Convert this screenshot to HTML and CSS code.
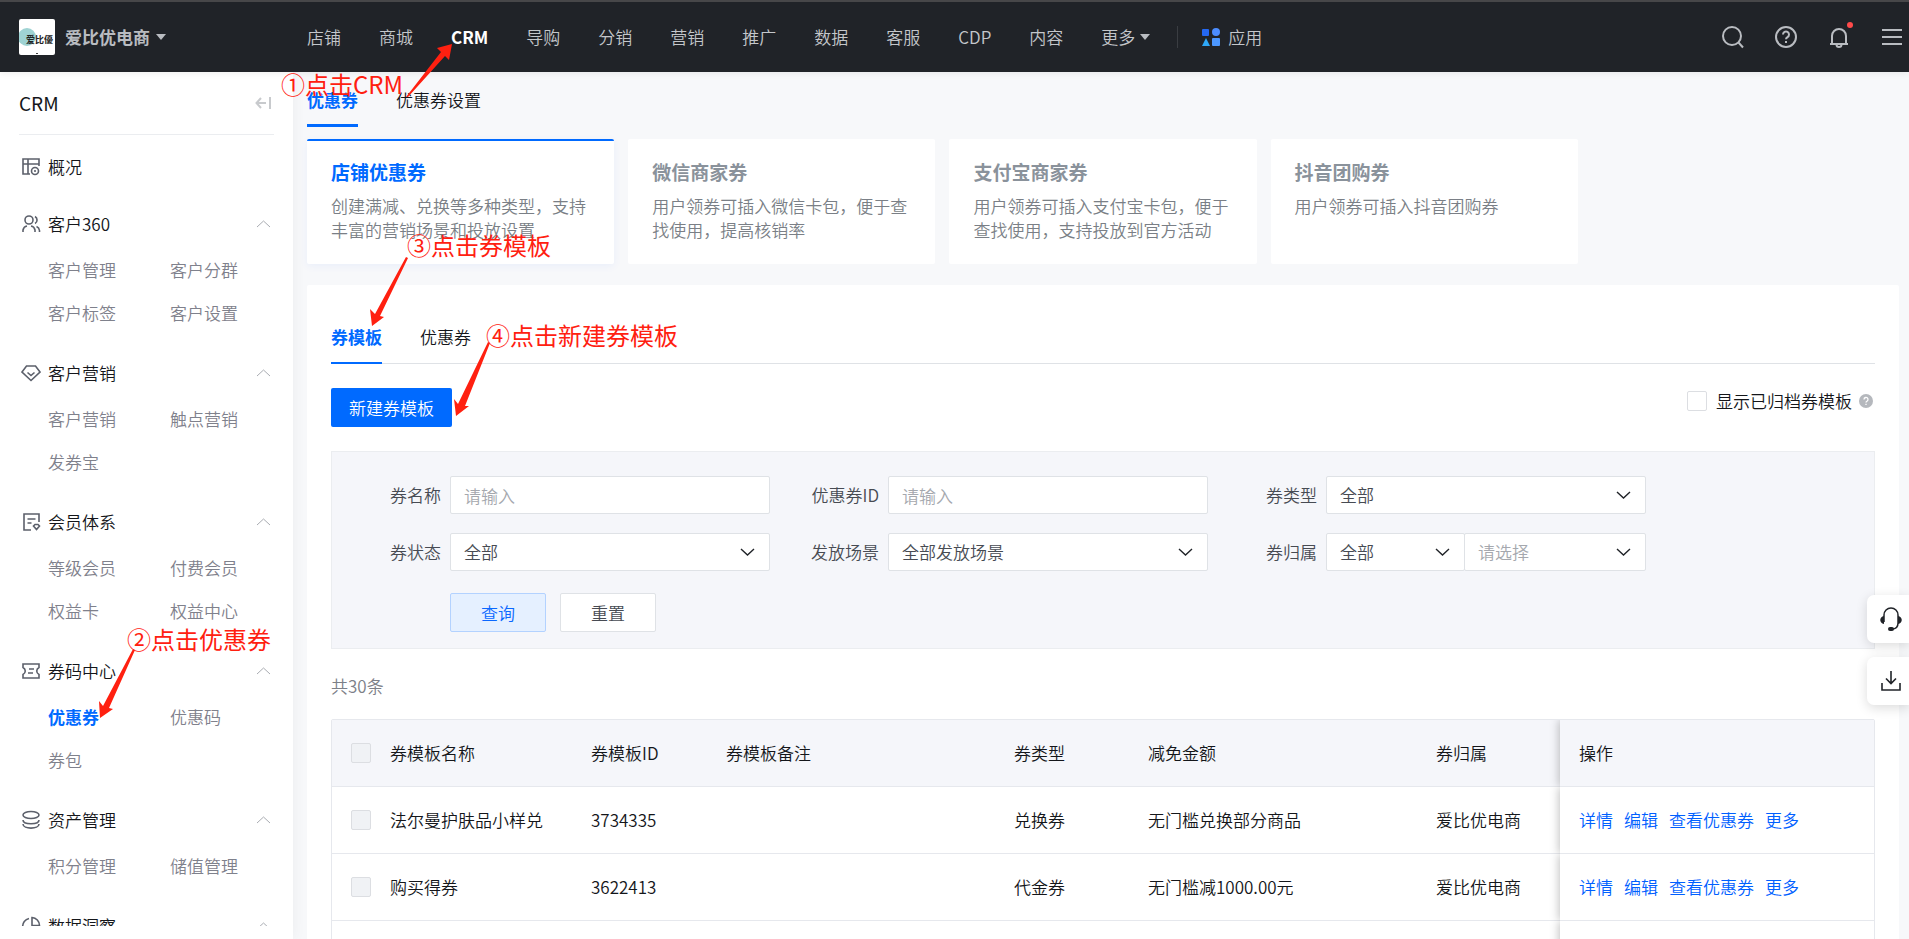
FILE: index.html
```
<!DOCTYPE html>
<html lang="zh-CN">
<head>
<meta charset="utf-8">
<title>优惠券 - CRM</title>
<link rel="stylesheet" href="styles.css">
</head>
<body>
<div class="app">
  <header class="topbar">
    <button class="shop" type="button">
      <svg class="shop-logo" viewBox="0 0 36 36" aria-hidden="true">
        <rect width="36" height="36" rx="2" fill="#fff"/>
        <circle cx="8" cy="18" r="9" fill="#9fd3d3"/>
        <text class="logo-text" x="7" y="24">爱比優</text>
        <rect x="17" y="34" width="2" height="1" fill="#444"/>
      </svg>
      <span class="shop-name">爱比优电商</span>
      <svg class="caret" viewBox="0 0 10 6"><path d="M0 0h10L5 6z"/></svg>
    </button>
    <nav class="topnav">
      <a href="#">店铺</a>
      <a href="#">商城</a>
      <a href="#" class="current">CRM</a>
      <a href="#">导购</a>
      <a href="#">分销</a>
      <a href="#">营销</a>
      <a href="#">推广</a>
      <a href="#">数据</a>
      <a href="#">客服</a>
      <a href="#">CDP</a>
      <a href="#">内容</a>
      <a href="#" class="more">更多<svg class="caret" viewBox="0 0 10 6"><path d="M0 0h10L5 6z"/></svg></a>
    </nav>
    <a href="#" class="apps">
      <svg width="18" height="18" viewBox="0 0 18 18" aria-hidden="true">
        <rect x="0" y="1" width="7" height="7" rx="1" fill="#2468f2"/>
        <circle cx="14" cy="4" r="4" fill="#4c8dff"/>
        <path d="M4 10l4 8H0z" fill="#2ea8f7"/>
        <rect x="10" y="10" width="8" height="8" rx="1" fill="#4c97ff"/>
      </svg>
      应用
    </a>
    <div class="tools">
      <button type="button" aria-label="搜索"><svg width="24" height="24" viewBox="0 0 24 24"><circle cx="11" cy="11" r="9"/><path d="M17.500 17.500l4.500 5"/></svg></button>
      <button type="button" aria-label="帮助"><svg width="24" height="24" viewBox="0 0 24 24"><circle cx="12" cy="12" r="10"/><path d="M9 9.500a3 3 0 1 1 4.500 2.600c-1 .6-1.500 1-1.500 2.200"/><path d="M12 16v2"/></svg></button>
      <button type="button" aria-label="通知" class="bell"><svg width="24" height="24" viewBox="0 0 24 24"><path d="M3 19h18M5 19v-8a7 7 0 0 1 14 0v8M9.500 19.500a2.500 2.500 0 0 0 5 0"/></svg><i class="dot"></i></button>
      <button type="button" aria-label="菜单"><svg width="24" height="24" viewBox="0 0 24 24"><path d="M2 5h20M2 12h20M2 19h20"/></svg></button>
    </div>
  </header>

  <div class="body">
    <aside class="sidebar">
      <div class="side-title">
        <h1>CRM</h1>
        <svg width="16" height="14" viewBox="0 0 16 14" aria-hidden="true"><path d="M11 7H2M6 2L1.500 7L6 12M15 1v12"/></svg>
      </div>
      <nav class="side-nav">
        <section class="group overview">
          <a class="head" href="#"><svg class="ico" viewBox="0 0 20 20"><path d="M18 9V2H2v15h7M2 7h16M7 2v15"/><circle cx="14" cy="14" r="3.500"/><path d="M14 13v2"/></svg><span>概况</span></a>
        </section>
        <section class="group">
          <a class="head" href="#"><svg class="ico" viewBox="0 0 20 20"><circle cx="8" cy="6" r="4"/><path d="M2 18v-2a5 5 0 0 1 4-4M10 12a5 5 0 0 1 4 4v2M14 2.500a4 4 0 0 1 0 7M15.500 12.500a5 5 0 0 1 3 4V18"/></svg><span>客户360</span><svg class="chev" viewBox="0 0 15 8"><path d="M1 7l6.500-6L14 7"/></svg></a>
          <div class="links"><a href="#">客户管理</a><a href="#">客户分群</a><a href="#">客户标签</a><a href="#">客户设置</a></div>
        </section>
        <section class="group">
          <a class="head" href="#"><svg class="ico" viewBox="0 0 20 20"><path d="M5.500 3h9L19 9l-9 8.500L1 9zM6.500 9.500L10 12.500l3.500-3"/></svg><span>客户营销</span><svg class="chev" viewBox="0 0 15 8"><path d="M1 7l6.500-6L14 7"/></svg></a>
          <div class="links"><a href="#">客户营销</a><a href="#">触点营销</a><a href="#">发券宝</a></div>
        </section>
        <section class="group">
          <a class="head" href="#"><svg class="ico" viewBox="0 0 20 20"><path d="M18 10V2H3v16h7M6.500 7h8M6.500 11h4"/><path d="M12.500 14l1.500-1.500h3l1.500 1.500-3 3.500z"/></svg><span>会员体系</span><svg class="chev" viewBox="0 0 15 8"><path d="M1 7l6.500-6L14 7"/></svg></a>
          <div class="links"><a href="#">等级会员</a><a href="#">付费会员</a><a href="#">权益卡</a><a href="#">权益中心</a></div>
        </section>
        <section class="group">
          <a class="head" href="#"><svg class="ico" viewBox="0 0 20 20"><path d="M2 3h16v3.500c-3 1.500-3 5.500 0 7V17H2v-3.500c3-1.500 3-5.500 0-7zM8 8h5M7 12h5"/></svg><span>券码中心</span><svg class="chev" viewBox="0 0 15 8"><path d="M1 7l6.500-6L14 7"/></svg></a>
          <div class="links"><a href="#" class="current">优惠券</a><a href="#">优惠码</a><a href="#">券包</a></div>
        </section>
        <section class="group">
          <a class="head" href="#"><svg class="ico" viewBox="0 0 20 20"><ellipse cx="10" cy="5" rx="8" ry="3.500"/><path d="M2 10c0 5 16 5 16 0M2 14c0 5.500 16 5.500 16 0"/></svg><span>资产管理</span><svg class="chev" viewBox="0 0 15 8"><path d="M1 7l6.500-6L14 7"/></svg></a>
          <div class="links"><a href="#">积分管理</a><a href="#">储值管理</a></div>
        </section>
        <section class="group">
          <a class="head" href="#"><svg class="ico" viewBox="0 0 20 20"><path d="M8 2.500a8 8 0 1 0 9.500 9.500M11 1.500a8 8 0 0 1 7.500 8H11z"/></svg><span>数据洞察</span><svg class="chev" viewBox="0 0 15 8"><path d="M1 7l6.500-6L14 7"/></svg></a>
        </section>
      </nav>
    </aside>

    <main class="main">
      <nav class="page-tabs">
        <a href="#" class="current">优惠券</a>
        <a href="#">优惠券设置</a>
      </nav>

      <div class="cards">
        <a class="card current" href="#"><h2>店铺优惠券</h2><p>创建满减、兑换等多种类型，支持丰富的营销场景和投放设置</p></a>
        <a class="card" href="#"><h2>微信商家券</h2><p>用户领券可插入微信卡包，便于查找使用，提高核销率</p></a>
        <a class="card" href="#"><h2>支付宝商家券</h2><p>用户领券可插入支付宝卡包，便于查找使用，支持投放到官方活动</p></a>
        <a class="card" href="#"><h2>抖音团购券</h2><p>用户领券可插入抖音团购券</p></a>
      </div>

      <section class="panel">
        <nav class="panel-tabs">
          <a href="#" class="current">券模板</a>
          <a href="#">优惠券</a>
        </nav>
        <div class="actions">
          <button class="btn primary" type="button">新建券模板</button>
          <label class="archived"><input type="checkbox" class="check">显示已归档券模板<svg width="14" height="14" viewBox="0 0 14 14" aria-hidden="true"><circle cx="7" cy="7" r="7" fill="#b5b8bd"/><path d="M5 5.500a2 2 0 1 1 3 1.700c-.7.400-1 .6-1 1.300M7 9.800v1.200" fill="none" stroke="#fff" stroke-width="1.300"/></svg></label>
        </div>

        <form class="filter">
          <label for="f-name">券名称</label>
          <input id="f-name" class="field" type="text" placeholder="请输入">
          <label for="f-id">优惠券ID</label>
          <input id="f-id" class="field" type="text" placeholder="请输入">
          <label for="f-type">券类型</label>
          <div class="select"><select id="f-type" class="field"><option>全部</option></select><svg viewBox="0 0 15 8"><path d="M1 1l6.500 6L14 1"/></svg></div>

          <label for="f-status">券状态</label>
          <div class="select"><select id="f-status" class="field"><option>全部</option></select><svg viewBox="0 0 15 8"><path d="M1 1l6.500 6L14 1"/></svg></div>
          <label for="f-scene">发放场景</label>
          <div class="select"><select id="f-scene" class="field"><option>全部发放场景</option></select><svg viewBox="0 0 15 8"><path d="M1 1l6.500 6L14 1"/></svg></div>
          <label for="f-owner">券归属</label>
          <div class="pair">
            <div class="select"><select id="f-owner" class="field"><option>全部</option></select><svg viewBox="0 0 15 8"><path d="M1 1l6.500 6L14 1"/></svg></div>
            <div class="select"><select class="field empty" aria-label="归属店铺"><option>请选择</option></select><svg viewBox="0 0 15 8"><path d="M1 1l6.500 6L14 1"/></svg></div>
          </div>

          <div class="filter-actions">
            <button class="btn soft" type="button">查询</button>
            <button class="btn plain" type="button">重置</button>
          </div>
        </form>

        <p class="total">共30条</p>

        <table class="grid">
          <colgroup><col class="c-check"><col class="c-name"><col class="c-id"><col class="c-note"><col class="c-type"><col class="c-amount"><col class="c-owner"><col></colgroup>
          <thead>
            <tr><th><input type="checkbox" class="check" disabled aria-label="全选"></th><th>券模板名称</th><th>券模板ID</th><th>券模板备注</th><th>券类型</th><th>减免金额</th><th>券归属</th><th class="ops">操作</th></tr>
          </thead>
          <tbody>
            <tr><td><input type="checkbox" class="check" disabled aria-label="选择 3734335"></td><td>法尔曼护肤品小样兑</td><td>3734335</td><td></td><td>兑换券</td><td>无门槛兑换部分商品</td><td>爱比优电商</td><td class="ops"><div class="op-links"><a href="#">详情</a><a href="#">编辑</a><a href="#">查看优惠券</a><a href="#">更多</a></div></td></tr>
            <tr><td><input type="checkbox" class="check" disabled aria-label="选择 3622413"></td><td>购买得券</td><td>3622413</td><td></td><td>代金券</td><td>无门槛减1000.00元</td><td>爱比优电商</td><td class="ops"><div class="op-links"><a href="#">详情</a><a href="#">编辑</a><a href="#">查看优惠券</a><a href="#">更多</a></div></td></tr>
            <tr><td></td><td></td><td></td><td></td><td></td><td></td><td></td><td class="ops"></td></tr>
          </tbody>
        </table>
      </section>
    </main>
  </div>

  <div class="floating">
    <button type="button" aria-label="客服"><svg width="24" height="26" viewBox="0 0 24 26"><path d="M5 16V9a7 7 0 0 1 14 0v8c0 4-2 6-6 6" fill="none" stroke="#202328" stroke-width="1.500"/><path d="M5 10v8c-5-1-5-7 0-8zM19 10v8c5-1 5-7 0-8z" fill="#202328"/><rect x="9" y="21" width="6" height="4" rx="2" fill="#202328"/></svg></button>
    <button type="button" aria-label="下载"><svg width="24" height="24" viewBox="0 0 24 24"><path d="M12 2v12M7 9.500l5 5 5-5M3 14v7h18v-7" fill="none" stroke="#202328" stroke-width="1.600"/></svg></button>
  </div>

  <div class="notes">
    <svg class="arrows" aria-hidden="true">
      <path d="M406 97L441 52L437 48L452 44L449 60L445 56L408 97z"/>
      <path d="M133 649L103 706L99 701L100 718L113 709L109 708L135 650z"/>
      <path d="M406 257L375 314L370 309L372 326L384 317L380 316L408 258z"/>
      <path d="M488 342L458 404L454 399L456 416L469 406L465 406L490 343z"/>
    </svg>
    <span class="note n1">①点击CRM</span>
    <span class="note n2">②点击优惠券</span>
    <span class="note n3">③点击券模板</span>
    <span class="note n4">④点击新建券模板</span>
  </div>
</div>
</body>
</html>
```
FILE: styles.css
```
* { box-sizing: border-box; }
body {
  margin: 0;
  font: 350 17px/24px "Noto Sans CJK SC", sans-serif;
  color: #14161a;
  background: #f7f8fa;
}
a { color: inherit; text-decoration: none; }
h1, h2, p { margin: 0; }
button, input, select { font: inherit; color: inherit; margin: 0; }
button { padding: 0; border: 0; background: none; cursor: pointer; }
svg { display: block; flex: none; }

.app { position: relative; display: flex; flex-direction: column; height: 100vh; overflow: hidden; }

/* top bar */
.topbar {
  position: relative;
  z-index: 1;
  display: flex;
  align-items: center;
  flex: none;
  height: 72px;
  padding: 0 5px 0 19px;
  border-top: 2px solid #474749;
  background: #202328;
  color: #c4c7cb;
  box-shadow: 0 2px 6px rgba(0, 0, 0, .06);
}
.shop { display: flex; align-items: center; gap: 10px; width: 288px; color: #b9bcc1; }
.shop-logo { width: 36px; height: 36px; }
.logo-text { font-size: 9px; font-weight: 700; fill: #222; }
.shop-name { font-weight: 700; }
.shop .caret { margin-left: -4px; }
.caret { width: 10px; height: 6px; fill: #b9bcc1; }
.topnav { display: flex; gap: 38px; }
.topnav .current { color: #fff; font-weight: 700; }
.more { display: flex; align-items: center; gap: 5px; }
.apps { display: flex; align-items: center; gap: 8px; height: 22px; margin-left: 27px; padding-left: 24px; border-left: 1px solid #3a3d42; }
.tools { display: flex; gap: 29px; margin-left: auto; }
.tools svg { fill: none; stroke: #b9bcc1; stroke-width: 2; }
.bell { position: relative; }
.dot { position: absolute; top: -3px; right: -2px; width: 6px; height: 6px; border-radius: 50%; background: #ff4a4a; }

.body { display: flex; flex: 1; min-height: 0; }

/* sidebar */
.sidebar { display: flex; flex-direction: column; flex: none; width: 293px; padding: 0 19px 13px; background: #fff; box-shadow: 0 0 14px rgba(32, 35, 40, .05); }
.side-title { display: flex; align-items: center; justify-content: space-between; flex: none; height: 63px; padding-right: 3px; border-bottom: 1px solid #ebedf0; }
.side-title h1 { font-size: 19px; font-weight: 400; }
.side-title svg { fill: none; stroke: #c8cacd; stroke-width: 2; }
.side-nav { flex: 1; min-height: 0; overflow: hidden; padding-top: 13px; }
.group { margin-bottom: 14px; }
.head { display: flex; align-items: center; height: 49px; padding: 0 3px 0 2px; }
.overview .head { height: 37px; }
.ico { width: 20px; height: 20px; margin-right: 7px; fill: none; stroke: #5c606b; stroke-width: 1.600; }
.chev { width: 15px; height: 8px; margin-left: auto; fill: none; stroke: #a9acb2; }
.links { display: grid; grid-template-columns: 122px 1fr; padding-left: 29px; line-height: 43px; color: #7f818c; }
.links .current { color: #006aff; font-weight: 700; }

/* main column */
.main { flex: 1; min-width: 0; padding: 0 10px 0 14px; overflow: hidden; display: flex; flex-direction: column; }
.page-tabs { display: flex; gap: 38px; flex: none; height: 55px; margin-bottom: 12px; line-height: 55px; }
.page-tabs .current { color: #006aff; font-weight: 700; border-bottom: 3px solid #006aff; }

.cards { display: grid; grid-template-columns: repeat(5, 1fr); gap: 14px; flex: none; margin-bottom: 21px; }
.card { min-height: 125px; padding: 17px 24px; border-top: 2px solid #fff; border-radius: 2px; background: #fff; color: #7a7f86; }
.card h2 { margin-bottom: 8px; font-size: 19px; line-height: 28px; font-weight: 700; color: #8a929b; }
.card.current { border-top-color: #006aff; box-shadow: 0 2px 8px rgba(0, 80, 255, .06); }
.card.current h2 { color: #006aff; }

.panel { flex: 1 0 auto; padding: 24px 24px 0; border-radius: 2px; background: #fff; }
.panel-tabs { display: flex; gap: 38px; height: 55px; border-bottom: 1px solid #dfe2e6; line-height: 55px; }
.panel-tabs .current { height: 55px; color: #006aff; font-weight: 700; border-bottom: 2px solid #006aff; }

.actions { display: flex; align-items: flex-start; justify-content: space-between; padding: 24px 0; }
.btn { height: 39px; border: 1px solid transparent; border-radius: 2px; }
.primary { padding: 0 17px; background: #006aff; color: #fff; }
.archived { display: flex; align-items: center; gap: 9px; padding: 1px 2px 0 0; }
.archived svg { margin-left: -2px; }
.check { flex: none; display: block; appearance: none; width: 20px; height: 20px; border: 1px solid #dcdee2; border-radius: 2px; background: #fff; }
.check:disabled { background: #f0f2f5; }

/* filter form */
.filter {
  display: grid;
  grid-template-columns: 109px 320px 100px 320px 100px 320px;
  column-gap: 9px;
  row-gap: 19px;
  align-items: center;
  padding: 24px 0 16px;
  border: 1px solid #ebedf0;
  background: #f5f6fa;
  color: #474b53;
}
.filter > label { text-align: right; }
.field { display: block; width: 100%; height: 38px; padding: 0 13px; border: 1px solid #dfe2e6; border-radius: 2px; background: #fff; appearance: none; }
.field::placeholder, .empty { color: #a5a8ae; }
.select { position: relative; }
.select svg { position: absolute; right: 15px; top: 15px; width: 15px; height: 8px; fill: none; stroke: #202328; stroke-width: 1.400; pointer-events: none; }
.pair { display: grid; grid-template-columns: 139px 1fr; }
.pair .select + .select { margin-left: -1px; }
.filter-actions { grid-column: 2 / -1; display: flex; gap: 14px; padding: 3px 0 0; }
.filter-actions .btn { width: 96px; }
.soft { border-color: #b3d2ff; background: #e5f0ff; color: #0a68ff; }
.plain { border-color: #dfe2e6; background: #fff; }

.total { padding: 25px 0 21px; color: #7c8088; }

/* table */
.grid { width: 100%; table-layout: fixed; border-spacing: 0; border: 1px solid #e6e8ed; border-radius: 2px 2px 0 0; }
.c-check { width: 44px; }
.c-name { width: 201px; }
.c-id { width: 135px; }
.c-note { width: 288px; }
.c-type { width: 134px; }
.c-amount { width: 288px; }
.c-owner { width: 138px; }
.grid th, .grid td { height: 67px; padding: 0 0 0 14px; border-bottom: 1px solid #e6e8ed; text-align: left; font-weight: inherit; white-space: nowrap; }
.grid th { background: #f5f6fa; }
.grid th:first-child, .grid td:first-child, .grid .ops { padding-left: 19px; }
.ops { clip-path: inset(0 0 0 -12px); box-shadow: -1px 0 9px rgba(0, 0, 0, .25); }
.op-links { display: flex; gap: 11px; color: #0060ff; }

/* side shortcuts */
.floating { position: absolute; right: 0; top: 595px; display: grid; gap: 14px; }
.floating button { display: flex; align-items: center; justify-content: center; width: 42px; height: 48px; padding-left: 6px; border-radius: 7px 0 0 7px; background: #fff; box-shadow: 0 3px 12px rgba(0, 0, 0, .14); }

/* walkthrough notes */
.notes { position: absolute; inset: 0; z-index: 2; pointer-events: none; color: #ff2010; font-size: 24px; font-weight: 400; line-height: 32px; }
.arrows { width: 100%; height: 100%; fill: #ff2010; }
.note { position: absolute; white-space: nowrap; }
.n1 { left: 281px; top: 68px; }
.n2 { left: 127px; top: 623px; }
.n3 { left: 407px; top: 229px; }
.n4 { left: 486px; top: 319px; }
```
